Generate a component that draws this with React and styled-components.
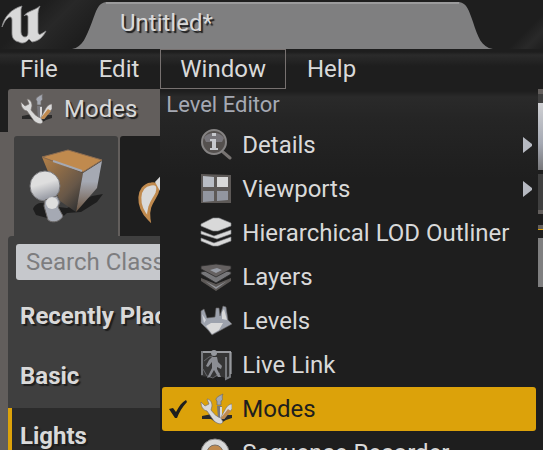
import React from 'react';
import styled, { createGlobalStyle } from 'styled-components';

const c = {
  ink: '#1e1e1e',
  panel: '#3f3f3f',
  well: '#625e5c',
  tab: '#7f7f80',
  text: '#d9d9d9',
  cool: '#a5a9b3',
  gold: '#dca20a',
  orange: '#c08a4e',
};

const Global = createGlobalStyle`
  * { box-sizing: border-box; }
  body { margin: 0; background: ${c.ink}; color: ${c.text}; font: 24px/28px Roboto, sans-serif; overflow: hidden; }
  button, input { font: inherit; color: inherit; border: 0; margin: 0; border-radius: 0; }
  svg { display: block; flex: none; }
`;

const Window = styled.div`
  height: 100vh;
  display: flex;
  flex-direction: column;
  overflow: hidden;
`;

const TitleBar = styled.header`
  display: flex;
  flex: none;
  align-items: flex-end;
  height: 49px;
  padding-right: 50px;
  background: linear-gradient(135deg, ${c.ink} 8%, #282828 13%, ${c.ink} 20%, ${c.ink} 94%, #292929 97%, ${c.ink} 100%);
`;

const LogoBox = styled.div`
  width: 72px;
  height: 49px;
`;

const DocumentTab = styled.div`
  display: flex;
  flex: 1;
  height: 47px;
`;

const TabFace = styled.div`
  flex: 1;
  padding: 5px 0 0 14px;
  background: ${c.tab};
  border-top: 2px solid #9b9b9c;
  text-shadow: 2px 2px 1px ${c.ink};
`;

const MenuBar = styled.nav`
  display: flex;
  flex: none;
  gap: 1px;
  height: 40px;
  background: linear-gradient(${c.ink} 3px, #2b2b2b 6px, ${c.ink} 17px);
`;

const MenuButton = styled.button`
  padding: 0 19px;
  border: 1px solid ${(p) => (p.$open ? '#777170' : 'transparent')};
  background: none;
`;

const MenuAnchor = styled.div`
  position: relative;
  display: flex;
`;

const Menu = styled.div`
  position: absolute;
  z-index: 2;
  top: 40px;
  left: 0;
  width: calc(100vw - 165px);
  height: calc(100vh - 89px);
  overflow: hidden;
  padding: 0 2px;
  background: linear-gradient(${c.ink} 2px, #2a2a2a 8px, #252525 30px, ${c.ink} 90px);
`;

const MenuHeading = styled.div`
  height: 34px;
  padding: 2px 4px;
  font-size: 22px;
  color: ${c.cool};
`;

const MenuItem = styled.button`
  display: flex;
  align-items: center;
  width: 100%;
  height: 44px;
  padding: 0 3px 0 6px;
  border-radius: 3px;
  text-align: left;
  background: ${(p) => (p.$active ? c.gold : 'transparent')};
  color: ${(p) => (p.$active ? c.ink : c.text)};
`;

const CheckSlot = styled.span`
  width: 32px;
`;

const ItemLabel = styled.span`
  flex: 1;
  padding-left: 10px;
  white-space: nowrap;
`;

const Workspace = styled.main`
  display: flex;
  flex: 1;
  min-height: 0;
`;

const ModesDock = styled.aside`
  flex: 1;
  display: flex;
  flex-direction: column;
  min-width: 0;
`;

const DockTab = styled.div`
  display: flex;
  flex: none;
  align-items: center;
  gap: 12px;
  width: 190px;
  height: 43px;
  margin-left: 8px;
  padding: 0 0 4px 12px;
  border-radius: 3px 0 0 0;
  background: ${c.well};
  text-shadow: 2px 2px 1px ${c.ink};
`;

const DockBody = styled.div`
  flex: 1;
  padding: 4px 0 0 8px;
  background: ${c.well};
`;

const ModeTabs = styled.div`
  display: flex;
  gap: 2px;
  padding-left: 6px;
`;

const ModeTab = styled.button`
  width: 104px;
  height: 100px;
  padding: 0;
  border-radius: 3px 3px 0 0;
  background: ${(p) => (p.$active ? c.panel : c.ink)};
`;

const ClassPanel = styled.div`
  height: 100%;
  padding-top: 8px;
  border-radius: 4px 0 0 0;
  background: ${c.panel};
`;

const SearchBox = styled.input`
  display: block;
  width: 240px;
  height: 36px;
  margin: 0 0 8px 8px;
  padding: 0 10px;
  border-radius: 3px;
  background: #c6c8cc;
  &::placeholder { color: #7d7d7f; opacity: 1; }
`;

const Category = styled.button`
  display: block;
  width: 100%;
  height: 60px;
  padding: 0 8px 4px;
  border-left: 4px solid ${(p) => (p.$active ? c.gold : 'transparent')};
  background: ${(p) => (p.$active ? '#2b2b2b' : 'none')};
  font-weight: 700;
  text-align: left;
  text-shadow: 2px 2px 1px ${c.ink};
`;

const Toolbar = styled.aside`
  display: flex;
  flex-direction: column;
  width: 5px;
`;

const Strip = styled.div`
  height: ${(p) => p.$h}px;
  background: ${(p) => p.$bg};
`;

const Logo = () => (
  <svg width="48" height="48" viewBox="0 0 48 48" aria-label="Unreal" role="img">
    <path fill={c.text} stroke="#8a8a8c" strokeWidth=".8" d="M2 27C4 17 11 9 22 6L21 9V32C21 35 23 37 25 37C27 37 28 35 28 33V17C28 15 26 14 24 16C27 11 34 11 40 6C38 10 38 12 38 16V31C38 34 39 35 41 34L46 31C43 37 39 41 32 42L29 39C26 43 22 44 19 42C14 41 12 38 12 33V20C12 17 10 16 8 18C5 20 4 23 2 27Z" />
  </svg>
);

const ModesIcon = () => (
  <svg width="32" height="32" viewBox="0 0 32 32">
    <path fill="#292929" d="M2 23L12 21L20 26L27 22H32V25L26 27L21 30L15 29L11 26L2 26Z" />
    <path fill="#77777c" d="M17 13H22L21 26H18Z" />
    <path fill={c.text} d="M20 14H22V25H20Z" />
    <path fill={c.cool} stroke="#6e6a68" strokeWidth=".7" d="M16 7C16 4 19 3 23 1C21 4 24 7 21 8V12H17V8Z" />
    <path fill={c.text} stroke="#77716e" strokeWidth=".6" d="M21 24L26 15C28 12 30 11 32 11V16L24 26Z" />
    <path fill={c.orange} d="M20 26L28 16L31 18L24 26Z" />
    <path fill={c.text} stroke="#77716e" strokeWidth=".7" d="M1 9L5 13L9 11L7 6C10 6 12 9 12 13L11 17C14 21 17 24 21 25L23 29C21 32 18 31 14 28L7 18C3 17 1 14 1 9Z" />
  </svg>
);

const DetailsIcon = () => (
  <svg width="32" height="32" viewBox="0 0 32 32">
    <path stroke="#777371" strokeWidth="3" strokeLinecap="round" d="M23 23L30 29" />
    <circle cx="14" cy="13" r="12" fill="#54504e" stroke="#858383" strokeWidth="2" />
    <path fill="#77757a" d="M4 9C7 3 20 2 24 9L22 13H6Z" />
    <path fill="#c6c8cd" d="M12 4H16V7H12ZM10 10H16V19H18V21H10V19H12V12H10Z" />
  </svg>
);

const ViewportsIcon = () => (
  <svg width="32" height="32" viewBox="0 0 32 32">
    <path fill="#5d5957" d="M1 1L31 2V30H1Z" />
    <path fill="#b9bdc5" d="M3 3L14 4V14H3Z" />
    <path fill={c.text} d="M17 4H28V14H17Z" />
    <path fill="#9296a0" d="M3 18H14V28L3 29ZM17 18H28V27L17 28Z" />
  </svg>
);

const StackIcon = ({ dim }) => dim ? (
  <svg width="32" height="32" viewBox="0 0 32 32">
    <path fill="#5c5856" d="M1 17L16 23L31 17V20L16 30L1 20Z" />
    <path fill="#92949a" d="M5 20L16 26L27 20L16 28Z" />
    <path fill="#77777a" stroke="#2b2b2b" strokeWidth=".8" d="M1 11L16 8L31 11V13L16 22L1 13Z" />
    <path fill="#656161" stroke="#2b2b2b" strokeWidth=".8" d="M1 5L16 3L31 5V8L16 16L1 8Z" />
    <path fill="#999da6" d="M10 9L17 7L22 9L16 12Z" />
  </svg>
) : (
  <svg width="32" height="32" viewBox="0 0 32 32">
    <path fill={c.text} stroke="#85868a" strokeWidth=".6" d="M1 7L13 1H19L31 6V9L18 14H13L1 9ZM1 14L14 19L31 13V17L17 22L1 17ZM1 21L14 26L31 20V24L18 29H13L1 24Z" />
  </svg>
);

const LevelsIcon = () => (
  <svg width="32" height="32" viewBox="0 0 32 32">
    <path fill="#9da2ad" stroke="#62605f" strokeWidth=".6" d="M1 6L4 4L7 13L15 12L16 3L19 3L20 11L23 1L26 2L28 15L32 19L12 30L8 25L1 18Z" />
    <path fill={c.text} d="M6 21L11 18L23 18L19 25L12 29ZM22 7L24 4L27 15L22 14Z" />
    <path fill="#d1d3d8" d="M2 9L6 15L4 18Z" />
  </svg>
);

const LiveLinkIcon = () => (
  <svg width="32" height="32" viewBox="0 0 32 32" fill="none">
    <path fill="#353535" d="M1 2H31V28L26 30L23 28H8L1 27Z" />
    <path stroke="#77797d" strokeWidth="2" d="M2 26V3H30V28L26 30V8" />
    <path stroke="#b7b9be" d="M3 3H31V25" />
    <path stroke="#65666a" d="M4 12L9 8L13 7M3 20L7 27L13 29L20 24" />
    <circle cx="14" cy="4" r="3" fill="#96999f" />
    <path fill="#8b8d93" d="M12 8H17L18 13L22 17L21 20L17 18V20L21 28H18L14 21L10 28L7 29L12 19V13L8 18L6 17L9 11Z" />
  </svg>
);

const RecorderIcon = () => (
  <svg width="32" height="32" viewBox="0 0 32 32">
    <circle cx="15" cy="16" r="11" fill={c.orange} stroke={c.text} strokeWidth="6" />
    <circle cx="15" cy="16" r="14" fill="none" stroke="#8a8888" />
    <circle cx="15" cy="16" r="8" fill="none" stroke="#77706a" />
  </svg>
);

const PlaceIcon = () => (
  <svg width="104" height="100" viewBox="0 0 104 100">
    <defs>
      <linearGradient id="cubeLeft" x2=".8" y2="1"><stop stopColor="#b38047" /><stop offset=".7" stopColor="#675748" /><stop offset="1" stopColor="#343434" /></linearGradient>
      <linearGradient id="cubeRight" x2="0" y2="1"><stop stopColor={c.cool} /><stop offset=".4" stopColor={c.cool} /><stop offset="1" stopColor="#6b5440" /></linearGradient>
      <linearGradient id="bulb" x2=".3" y2="1"><stop offset=".5" stopColor="#dedede" /><stop offset="1" stopColor="#989ba4" /></linearGradient>
    </defs>
    <path fill={c.ink} d="M19 73C22 65 31 66 36 70L53 72L78 60L89 58L83 66L67 76L53 77L44 85L22 79Z" />
    <path fill="url(#cubeLeft)" d="M28 21L69 37L62 76L46 65Z" />
    <path fill="url(#cubeRight)" d="M69 37L88 25L83 52L62 76Z" />
    <path fill={c.orange} stroke="#8c6c50" d="M28 21L54 14L88 24L69 36Z" />
    <path stroke={c.cool} strokeWidth="2" fill="none" d="M39 25L68 35" />
    <circle cx="31" cy="50" r="15" fill="url(#bulb)" stroke="#77777a" />
    <path fill={c.cool} stroke="#6d6a69" d="M31 64L43 60L46 66L44 71L49 80C47 85 39 88 34 84L30 70Z" />
    <circle cx="38" cy="67" r="6" fill="#dedede" />
  </svg>
);

const PaintIcon = () => (
  <svg width="104" height="100" viewBox="0 0 104 100">
    <path fill={c.text} stroke={c.orange} strokeWidth="3" d="M29 83C16 70 17 50 31 48C37 47 39 50 37 57C34 64 27 70 29 83Z" />
    <path fill={c.text} d="M35 46L50 30L53 43L40 55Z" />
  </svg>
);

const Check = () => (
  <svg width="20" height="20" viewBox="0 0 20 20"><path fill={c.ink} d="M1 10L5 9L8 13C11 7 14 3 18 1L19 3C14 8 11 14 9 19H7Z" /></svg>
);

const Arrow = () => (
  <svg width="10" height="16" viewBox="0 0 10 16"><path fill="#b6b9c1" d="M0 0L9 7V9L0 16Z" /></svg>
);

const items = [
  { label: 'Details', Icon: DetailsIcon, sub: true },
  { label: 'Viewports', Icon: ViewportsIcon, sub: true },
  { label: 'Hierarchical LOD Outliner', Icon: StackIcon },
  { label: 'Layers', Icon: () => <StackIcon dim /> },
  { label: 'Levels', Icon: LevelsIcon },
  { label: 'Live Link', Icon: LiveLinkIcon },
  { label: 'Modes', Icon: ModesIcon, active: true },
  { label: 'Sequence Recorder', Icon: RecorderIcon },
];

export default function App() {
  return (
    <Window>
      <Global />
      <TitleBar>
        <LogoBox><Logo /></LogoBox>
        <DocumentTab>
          <svg width="34" height="47" viewBox="0 0 34 47"><path fill={c.tab} d="M34 0C26 1 24 9 20 20C14 35 11 45 0 47H34Z" /></svg>
          <TabFace>Untitled*</TabFace>
          <svg width="34" height="47" viewBox="0 0 34 47"><path fill={c.tab} d="M0 0C8 1 10 9 14 20C19 35 22 45 34 47H0Z" /></svg>
        </DocumentTab>
      </TitleBar>
      <MenuBar>
        <MenuButton>File</MenuButton>
        <MenuButton>Edit</MenuButton>
        <MenuAnchor>
          <MenuButton $open aria-expanded="true">Window</MenuButton>
          <Menu role="menu">
            <MenuHeading>Level Editor</MenuHeading>
            {items.map(({ label, Icon, sub, active }) => (
              <MenuItem key={label} role="menuitem" $active={active}>
                <CheckSlot>{active && <Check />}</CheckSlot>
                <Icon />
                <ItemLabel>{label}</ItemLabel>
                {sub && <Arrow />}
              </MenuItem>
            ))}
          </Menu>
        </MenuAnchor>
        <MenuButton>Help</MenuButton>
      </MenuBar>
      <Workspace>
        <ModesDock>
          <DockTab><ModesIcon />Modes</DockTab>
          <DockBody>
            <ModeTabs>
              <ModeTab $active aria-label="Place"><PlaceIcon /></ModeTab>
              <ModeTab aria-label="Paint"><PaintIcon /></ModeTab>
            </ModeTabs>
            <ClassPanel>
              <SearchBox aria-label="Search Classes" placeholder="Search Classes" />
              <Category>Recently Placed</Category>
              <Category>Basic</Category>
              <Category $active>Lights</Category>
            </ClassPanel>
          </DockBody>
        </ModesDock>
        <Toolbar>
          <Strip $h={5} $bg={c.well} />
          <Strip $h={9} $bg={c.panel} />
          <Strip $h={67} $bg={`linear-gradient(#cfd0d3, ${c.cool} 60%, #77777a)`} />
          <Strip $h={4} $bg={c.ink} />
          <Strip $h={36} $bg={c.panel} />
          <Strip $h={4} $bg={c.well} />
          <Strip $h={11} $bg={c.ink} />
          <Strip $h={4} $bg={c.well} />
          <Strip $h={1} $bg={c.gold} />
          <Strip $h={8} $bg={c.ink} />
          <Strip $h={49} $bg={c.tab} />
        </Toolbar>
      </Workspace>
    </Window>
  );
}
